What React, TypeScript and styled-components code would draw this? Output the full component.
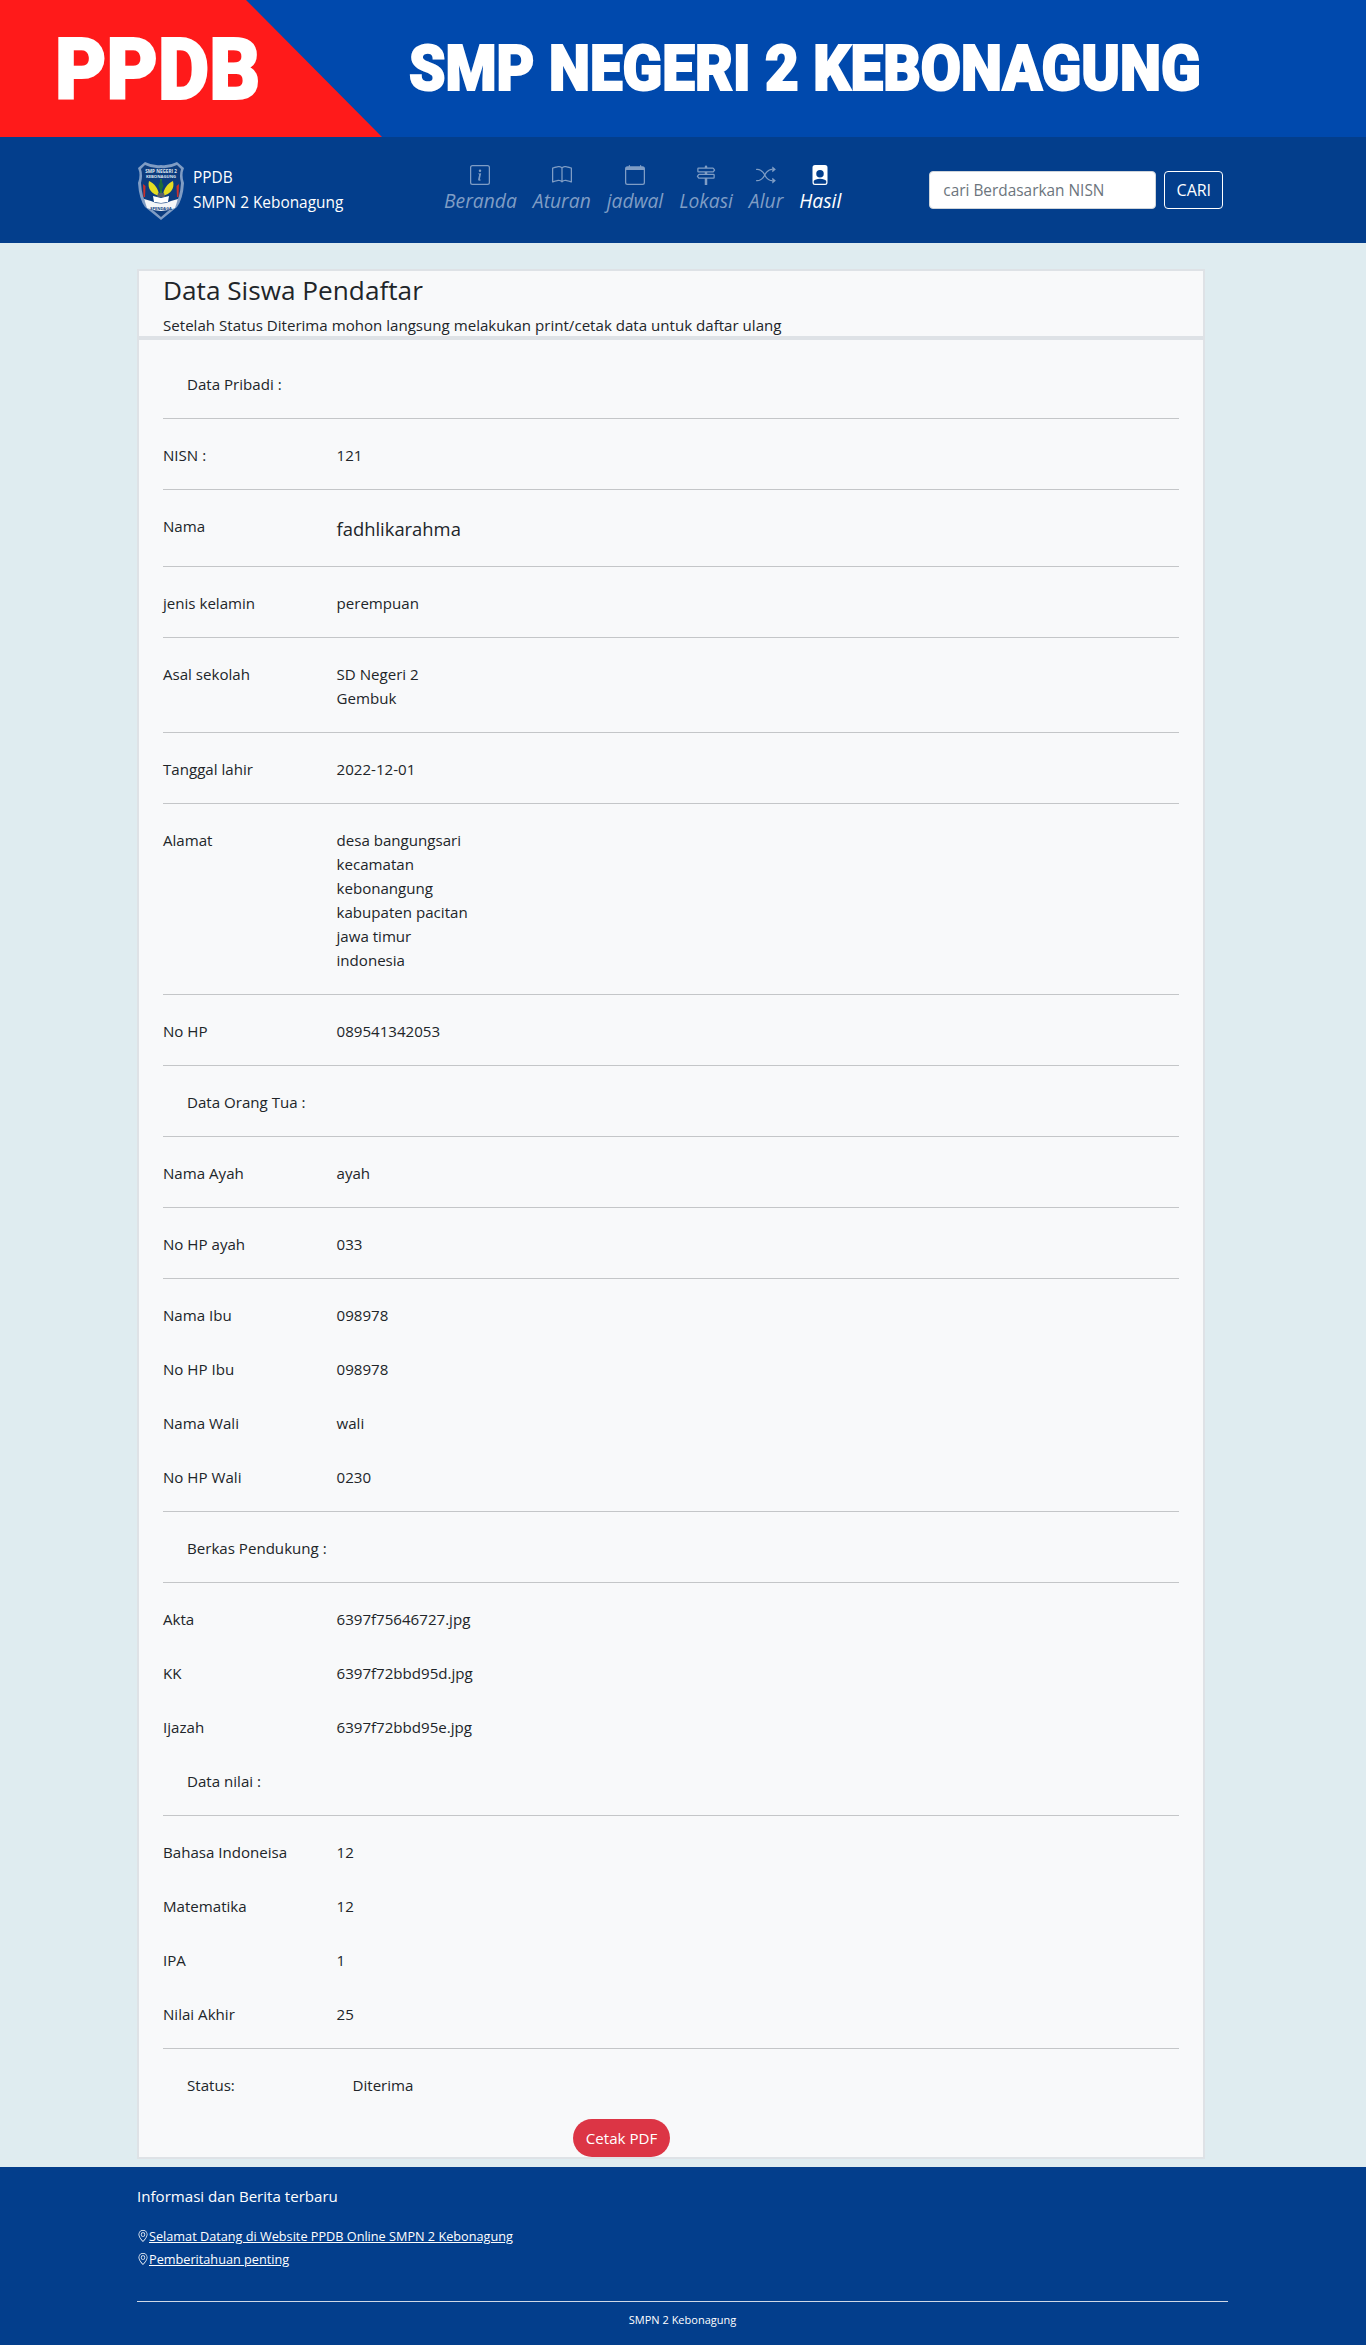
import styled, { createGlobalStyle } from "styled-components";
import {
  BsBook,
  BsCalendar,
  BsFilePersonFill,
  BsGeoAlt,
  BsInfoSquare,
  BsShuffle,
  BsSignpost2,
} from "react-icons/bs";

type RowData = {
  label: string;
  value?: string[];
  big?: boolean;
  section?: boolean;
  line?: boolean;
};

const rows: RowData[] = [
  { label: "Data Pribadi :", section: true, line: true },
  { label: "NISN :", value: ["121"], line: true },
  { label: "Nama", value: ["fadhlikarahma"], big: true, line: true },
  { label: "jenis kelamin", value: ["perempuan"], line: true },
  { label: "Asal sekolah", value: ["SD Negeri 2", "Gembuk"], line: true },
  { label: "Tanggal lahir", value: ["2022-12-01"], line: true },
  {
    label: "Alamat",
    value: [
      "desa bangungsari",
      "kecamatan",
      "kebonangung",
      "kabupaten pacitan",
      "jawa timur",
      "indonesia",
    ],
    line: true,
  },
  { label: "No HP", value: ["089541342053"], line: true },
  { label: "Data Orang Tua :", section: true, line: true },
  { label: "Nama Ayah", value: ["ayah"], line: true },
  { label: "No HP ayah", value: ["033"], line: true },
  { label: "Nama Ibu", value: ["098978"] },
  { label: "No HP Ibu", value: ["098978"] },
  { label: "Nama Wali", value: ["wali"] },
  { label: "No HP Wali", value: ["0230"], line: true },
  { label: "Berkas Pendukung :", section: true, line: true },
  { label: "Akta", value: ["6397f75646727.jpg"] },
  { label: "KK", value: ["6397f72bbd95d.jpg"] },
  { label: "Ijazah", value: ["6397f72bbd95e.jpg"] },
  { label: "Data nilai :", section: true, line: true },
  { label: "Bahasa Indoneisa", value: ["12"] },
  { label: "Matematika", value: ["12"] },
  { label: "IPA", value: ["1"] },
  { label: "Nilai Akhir", value: ["25"], line: true },
  { label: "Status:", value: ["Diterima"], section: true },
];

const navItems = [
  { label: "Beranda", icon: <BsInfoSquare size={20} /> },
  { label: "Aturan", icon: <BsBook size={20} /> },
  { label: "jadwal", icon: <BsCalendar size={20} /> },
  { label: "Lokasi", icon: <BsSignpost2 size={20} /> },
  { label: "Alur", icon: <BsShuffle size={20} /> },
  { label: "Hasil", icon: <BsFilePersonFill size={20} />, active: true },
];

const GlobalStyle = createGlobalStyle`
  * {
    box-sizing: border-box;
  }
  body {
    margin: 0;
    background: #dfecf0;
    color: #212529;
    font-family: "Open Sans", "Noto Sans", sans-serif;
    font-size: 15.1px;
    line-height: 24px;
  }
`;

const Banner = styled.header`
  display: flex;
  height: 137px;
  background: #0049ad;
  color: #fff;
  font-family: Roboto, "Open Sans", sans-serif;
  font-weight: 900;
  -webkit-text-stroke: 2px #fff;
  white-space: nowrap;
`;

const RedCorner = styled.div`
  width: 382px;
  padding: 20px 0 0 55px;
  background: #ff1a1a;
  clip-path: polygon(0 0, 246px 0, 100% 100%, 0 100%);
  font-size: 86px;
  line-height: 100px;
`;

const WideText = styled.span<{ $ratio: number }>`
  display: inline-block;
  transform: scaleX(${({ $ratio }) => $ratio});
  transform-origin: left center;
`;

const BannerTitle = styled.div`
  margin: 24px 0 0 27px;
  font-size: 63px;
  line-height: 90px;
`;

const Navbar = styled.nav`
  display: flex;
  align-items: center;
  height: 106px;
  padding-left: 137px;
  background: #033e8c;
  color: #fff;
`;

const Brand = styled.div`
  display: flex;
  align-items: center;
  gap: 8px;
  width: 307px;
`;

const BrandText = styled.div`
  font-size: 15.4px;
  line-height: 25px;
  white-space: nowrap;
`;

const NavList = styled.ul`
  display: flex;
  gap: 16px;
  margin: 0;
  padding: 0;
  list-style: none;
`;

const NavItem = styled.li<{ $active?: boolean }>`
  display: flex;
  flex-direction: column;
  align-items: center;
  gap: 2px;
  color: ${({ $active }) => ($active ? "#fff" : "#7f9dc5")};
  font-size: 19.3px;
  font-style: italic;
  line-height: 28px;
`;

const SearchForm = styled.form`
  display: flex;
  gap: 8px;
  margin-left: 88px;
`;

const SearchInput = styled.input`
  width: 227px;
  height: 38px;
  padding: 0 13px;
  border: 1px solid #ced4da;
  border-radius: 4px;
  background: #fff;
  font-family: inherit;
  font-size: 15.4px;
  &::placeholder {
    color: #6c757d;
    opacity: 1;
  }
`;

const SearchButton = styled.button`
  width: 59px;
  height: 38px;
  padding: 0;
  border: 1px solid #fff;
  border-radius: 4px;
  background: transparent;
  color: #fff;
  font-family: inherit;
  font-size: 16px;
`;

const Main = styled.main`
  padding: 26px 0 8px 137px;
`;

const Card = styled.section`
  width: 1068px;
  border: 2px solid #dee2e6;
  background: #f8f9fa;
`;

const CardHeader = styled.div`
  height: 69px;
  padding: 2px 24px 0;
  border-bottom: 4px solid #dee2e6;
`;

const CardTitle = styled.h1`
  margin: 0 0 8px;
  font-size: 26.2px;
  font-weight: 400;
  line-height: 34px;
`;

const CardSubtitle = styled.p`
  margin: 0;
  line-height: 20px;
  white-space: nowrap;
`;

const CardBody = styled.div`
  padding: 24px 24px 0;
`;

const Row = styled.div<{ $section?: boolean }>`
  display: flex;
  padding: 8px 0 22px ${({ $section }) => ($section ? "24px" : "0")};
`;

const Label = styled.div<{ $section?: boolean }>`
  flex: none;
  width: ${({ $section }) => ($section ? "165.5px" : "173.5px")};
`;

const Value = styled.div<{ $big?: boolean }>`
  font-size: ${({ $big }) => ($big ? "18.4px" : "15.1px")};
  line-height: ${({ $big }) => ($big ? "30px" : "24px")};
`;

const Divider = styled.hr`
  height: 1px;
  margin: 0 0 16px;
  border: 0;
  background: #c4c6c8;
`;

const PrintButton = styled.button`
  display: block;
  width: 97px;
  height: 38px;
  margin-left: 410px;
  padding: 0;
  border: 0;
  border-radius: 19px;
  background: #dc3545;
  color: #fff;
  font-family: inherit;
  font-size: 15.1px;
`;

const Footer = styled.footer`
  height: 178px;
  padding: 17px 138px 0 137px;
  background: #033e8c;
  color: #fff;
`;

const FooterTitle = styled.div`
  margin-bottom: 16px;
  line-height: 24px;
`;

const FooterLink = styled.a`
  display: flex;
  align-items: center;
  height: 23px;
  color: #fff;
  font-size: 12.7px;
  text-decoration: underline;
`;

const FooterLine = styled.hr`
  height: 1px;
  margin: 31px 0 9px;
  border: 0;
  background: #cfd8e6;
`;

const Copyright = styled.div`
  font-size: 11px;
  line-height: 18px;
  text-align: center;
`;

function Logo() {
  return (
    <svg width="48" height="59" viewBox="0 0 48 59">
      <path
        d="M8 1 Q16 5 24 4 Q32 5 40 1 L47 7 Q44 14 47 22 Q46 38 40 46 L24 59 L8 46 Q2 38 1 22 Q4 14 1 7 Z"
        fill="#7f9cc4"
      />
      <path
        d="M8 4 Q16 8 24 7 Q32 8 40 4 L44 8 Q42 14 44 22 Q43 37 38 44 L24 56 L10 44 Q5 37 4 22 Q6 14 4 8 Z"
        fill="#0d3c7e"
      />
      <text x="24" y="12" fontSize="4.6" fontWeight="700" fill="#dfe6f0" textAnchor="middle">
        SMP NEGERI 2
      </text>
      <text x="24" y="17" fontSize="4.2" fontWeight="700" fill="#dfe6f0" textAnchor="middle">
        KEBONAGUNG
      </text>
      <path d="M22 35 C15 33 10 28 12 20 C17 22 22 28 22 35 Z" fill="#e4dc22" />
      <path d="M26 35 C33 33 38 28 36 20 C31 22 26 28 26 35 Z" fill="#e4dc22" />
      <rect x="23" y="18" width="2" height="17" fill="#2c7a3f" />
      <path d="M24 18 L26.5 25 L24 31 L21.500 25 Z" fill="#1e6a3a" />
      <path d="M6 23 L8.500 25 L8 36 L6.500 36 Z" fill="#c9302c" />
      <path d="M42 23 L39.500 25 L40 36 L41.500 36 Z" fill="#c9302c" />
      <path d="M16 35 L24 37 L32 35 L31 41 L24 42 L17 41 Z" fill="#fff" />
      <path d="M21 32 H27 L28 36 H20 Z" fill="#59606a" />
      <path d="M7 38 L14 40 Q24 45 34 40 L41 38 L38 47 Q24 53 10 47 Z" fill="#f4f6f8" />
      <text x="24" y="48.500" fontSize="4" fontWeight="700" fill="#0d3c7e" textAnchor="middle">
        SPENDAGA
      </text>
    </svg>
  );
}

export default function App() {
  return (
    <>
      <GlobalStyle />
      <Banner>
        <RedCorner>
          <WideText $ratio={0.92}>PPDB</WideText>
        </RedCorner>
        <BannerTitle>
          <WideText $ratio={0.925}>SMP NEGERI 2 KEBONAGUNG</WideText>
        </BannerTitle>
      </Banner>
      <Navbar>
        <Brand>
          <Logo />
          <BrandText>
            PPDB
            <br />
            SMPN 2 Kebonagung
          </BrandText>
        </Brand>
        <NavList>
          {navItems.map((item) => (
            <NavItem key={item.label} $active={item.active}>
              {item.icon}
              {item.label}
            </NavItem>
          ))}
        </NavList>
        <SearchForm>
          <SearchInput placeholder="cari Berdasarkan NISN" />
          <SearchButton type="button">CARI</SearchButton>
        </SearchForm>
      </Navbar>
      <Main>
        <Card>
          <CardHeader>
            <CardTitle>Data Siswa Pendaftar</CardTitle>
            <CardSubtitle>
              Setelah Status Diterima mohon langsung melakukan print/cetak data untuk daftar ulang
            </CardSubtitle>
          </CardHeader>
          <CardBody>
            {rows.map((row) => (
              <div key={row.label}>
                <Row $section={row.section}>
                  <Label $section={row.section}>{row.label}</Label>
                  {row.value && (
                    <Value $big={row.big}>
                      {row.value.map((text) => (
                        <div key={text}>{text}</div>
                      ))}
                    </Value>
                  )}
                </Row>
                {row.line && <Divider />}
              </div>
            ))}
            <PrintButton type="button">Cetak PDF</PrintButton>
          </CardBody>
        </Card>
      </Main>
      <Footer>
        <FooterTitle>Informasi dan Berita terbaru</FooterTitle>
        <FooterLink href="#">
          <BsGeoAlt size={12} />
          Selamat Datang di Website PPDB Online SMPN 2 Kebonagung
        </FooterLink>
        <FooterLink href="#">
          <BsGeoAlt size={12} />
          Pemberitahuan penting
        </FooterLink>
        <FooterLine />
        <Copyright>SMPN 2 Kebonagung</Copyright>
      </Footer>
    </>
  );
}
